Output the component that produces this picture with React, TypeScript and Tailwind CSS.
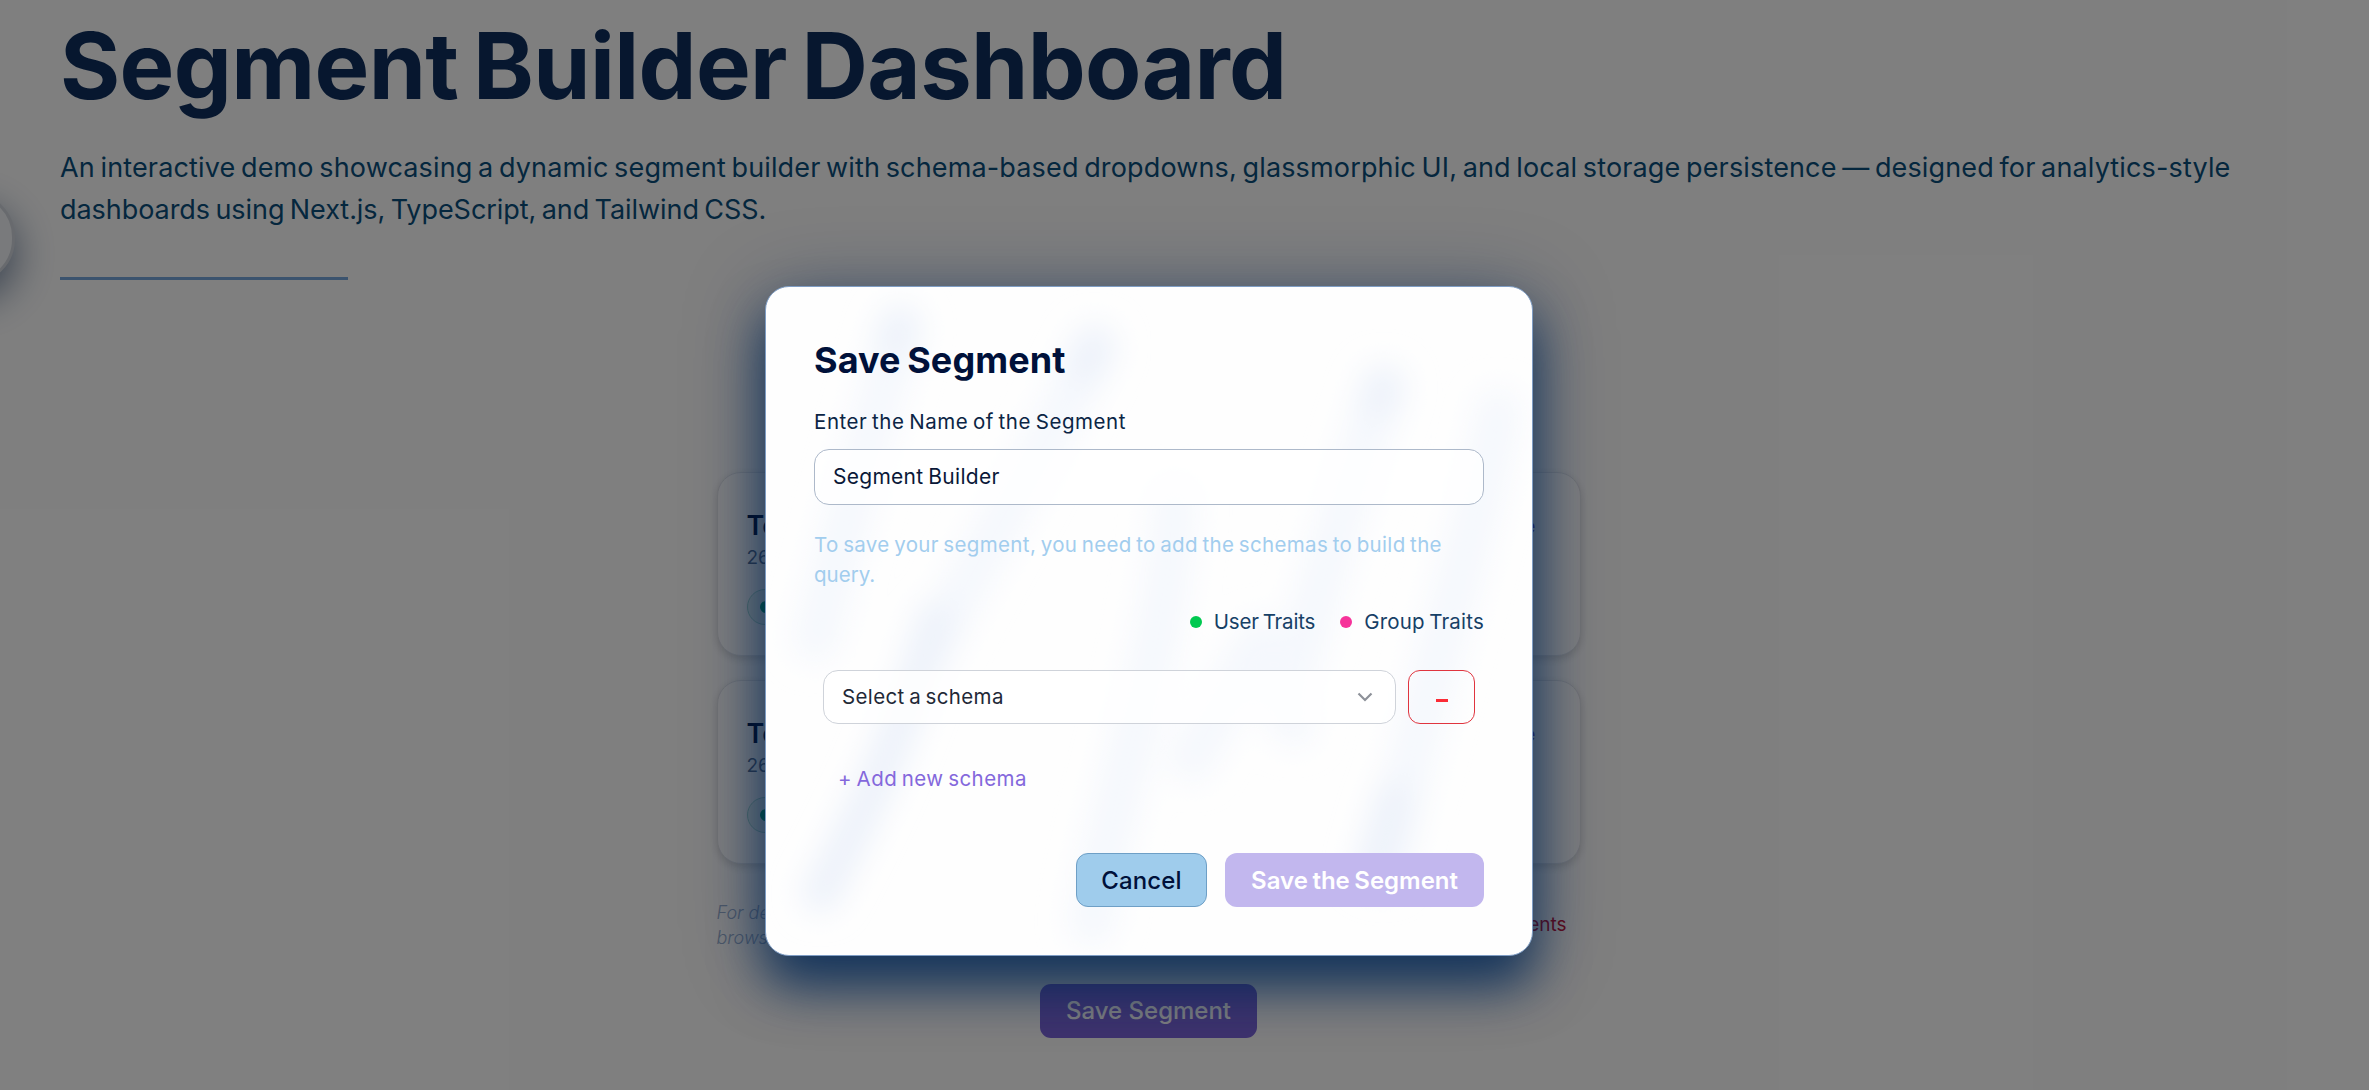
import React from 'react';

function SegmentCard() {
  return (
    <article className="h-[184px] rounded-[24px] border border-gray-200 bg-white px-[29px] pt-[35px] shadow-[0_3px_8px_rgba(0,0,0,0.16)]">
      <div className="flex items-center justify-between pr-[15px]">
        <h3 className="text-[27px] font-semibold leading-9 text-[#00113a]">Test</h3>
        <button className="text-[20px] leading-9 text-[#6941c6]">View more</button>
      </div>
      <p className="text-[19px] leading-7 text-[#5b6f8e]">26/10/2025</p>
      <span className="mt-[17px] inline-flex h-9 items-center gap-2 rounded-full border border-[#a9dccf] bg-[#e8f6f5] px-3 text-base text-[#0f6a5c]">
        <i className="size-3 rounded-full bg-[#00a87a]" />
        Age
      </span>
    </article>
  );
}

function Dashboard() {
  return (
    <main className="h-[1090px] w-[2237px] bg-white pl-[60px] pt-4">
      <h1 className="whitespace-nowrap text-[92px] font-bold leading-[100px] tracking-[-0.007em] text-[#0f2f5e] [word-spacing:-0.07em]">
        Segment Builder Dashboard
      </h1>
      <p className="mt-[31px] whitespace-nowrap text-[27px] leading-[42px] text-[#0b4f7d] [word-spacing:-0.08em]">
        <span className="tracking-[0.0055em]">
          An interactive demo showcasing a dynamic segment builder with schema-based dropdowns, glassmorphic UI, and local
          storage persistence — designed for analytics-style
        </span>
        <br />
        <span className="tracking-[-0.002em]">dashboards using Next.js, TypeScript, and Tailwind CSS.</span>
      </p>
      <div className="mt-[46px] h-[3px] w-[288px] bg-[#76a6dc]" />
      <section className="mx-auto mt-[192px] w-[864px]">
        <div className="flex flex-col gap-6">
          <SegmentCard />
          <SegmentCard />
        </div>
        <div className="mt-[36px] flex h-[50px] items-center justify-between pr-[14px]">
          <p className="text-[18px] font-light italic leading-[25px] text-[#9ab0d0]">
            For demo purposes, segments are saved in your
            <br />
            browser storage
          </p>
          <button className="text-[19px] text-[#c8102e]">Clear all segments</button>
        </div>
        <div className="mt-[34px] flex justify-center">
          <button className="h-[54px] w-[217px] rounded-[11px] bg-[#7d66dd] text-[24px] font-medium text-white">
            Save Segment
          </button>
        </div>
      </section>
    </main>
  );
}

function Streaks() {
  return (
    <svg className="absolute inset-0 size-full rounded-[23px]" viewBox="766 286 767 670" fill="none">
      <defs>
        <filter id="soft" x="-30%" y="-30%" width="160%" height="160%">
          <feGaussianBlur stdDeviation="15" />
        </filter>
      </defs>
      <g filter="url(#soft)" strokeLinecap="round" strokeLinejoin="round">
        <g stroke="#f5f8fd" strokeWidth="46">
          <path d="M900 325 C880 400 850 500 815 640" />
          <path d="M1095 345 C1060 420 1000 520 930 650" />
          <path d="M1385 385 C1350 480 1320 600 1285 700" />
          <path d="M1500 410 C1480 520 1430 680 1385 870" />
          <path d="M1175 500 C1170 640 1110 800 1092 925" />
          <path d="M1260 640 L1192 760 M1260 640 L1294 725" />
        </g>
        <g stroke="#edf2fa" strokeWidth="38">
          <path d="M935 620 C900 740 860 820 820 895" />
          <path d="M900 325 L895 340 M1096 345 L1086 365 M1385 385 L1381 400" />
          <path d="M1395 800 L1375 870" />
        </g>
      </g>
    </svg>
  );
}

function Trait({ dot, className, label }: { dot: string; className: string; label: string }) {
  return (
    <span className="flex items-center gap-[12px]">
      <i className={`size-3 rounded-full ${dot}`} />
      <span className={className}>{label}</span>
    </span>
  );
}

function SaveDialog() {
  return (
    <div
      role="dialog"
      className="relative ml-[765px] mt-[286px] h-[670px] w-[768px] rounded-[24px] border border-[#7f9dc4] bg-[#fefefe] shadow-[0_30px_50px_0_rgba(0,38,85,0.78),0_8px_80px_rgba(0,38,85,0.4)]"
    >
      <Streaks />
      <div className="relative px-[48px] pt-[49px] text-[20.5px] leading-[30px]">
        <h2 className="text-[36px] font-bold leading-[48px] tracking-[0.003em] text-[#00113a] [word-spacing:-0.06em]">
          Save Segment
        </h2>
        <label className="mt-[23px] block tracking-[0.027em] text-[#0b2545] [word-spacing:-0.08em]">
          Enter the Name of the Segment
        </label>
        <div className="mt-[12px] flex h-[56px] items-center rounded-[15px] border border-[#adb9ca] bg-white/80 px-[18px] text-[21px] tracking-[0.013em] text-[#0a1838] [word-spacing:-0.06em]">
          Segment Builder
        </div>
        <p className="mt-[25px] whitespace-nowrap text-[#a2cdee] [word-spacing:-0.08em]">
          <span className="tracking-[0.0175em]">To save your segment, you need to add the schemas to build the</span>
          <br />
          query.
        </p>
        <div className="mt-[17px] flex justify-end gap-[25px] text-[#164066] [word-spacing:-0.08em]">
          <Trait dot="bg-[#00c950]" className="tracking-[-0.009em]" label="User Traits" />
          <Trait dot="bg-[#f6339a]" className="tracking-[0.01em]" label="Group Traits" />
        </div>
        <div className="mt-[33px] flex gap-[12px] pl-[9px]">
          <div className="flex h-[54px] w-[573px] items-center justify-between rounded-[15px] border border-[#cfd3da] bg-white/80 pl-[18px] pr-[22px] text-[#1f2937]">
            <span className="tracking-[0.018em] [word-spacing:-0.08em]">Select a schema</span>
            <svg className="size-[16px]" viewBox="0 0 16 16" fill="none" stroke="#8d9199" strokeWidth="2.2">
              <path d="M1.5 4.5 L8 11 L14.5 4.5" />
            </svg>
          </div>
          <button className="flex h-[54px] w-[67px] items-center justify-center rounded-[12px] border border-[#e0353f]">
            <svg className="mt-[7px] h-[3px] w-[12px]" viewBox="0 0 12 3">
              <rect width="12" height="3" fill="#fb2c36" />
            </svg>
          </button>
        </div>
        <button className="ml-[24px] mt-[40px] block tracking-[0.022em] text-[#8468dc] [word-spacing:-0.08em]">
          + Add new schema
        </button>
        <div className="mt-[59px] flex justify-end gap-[18px] text-[24px]">
          <button className="h-[54px] w-[131px] rounded-[12px] border border-[#6e9fc6] bg-[#9fccec] pt-px font-medium tracking-[0.005em] text-[#00113a]">
            Cancel
          </button>
          <button className="h-[54px] w-[259px] rounded-[12px] bg-[#c2b7ee] pt-px font-semibold tracking-[-0.001em] text-white [word-spacing:-0.06em]">
            Save the Segment
          </button>
        </div>
      </div>
    </div>
  );
}

export default function App() {
  return (
    <div className="relative h-[1090px] w-full overflow-hidden bg-white font-['Inter',sans-serif]">
      <Dashboard />
      <button className="absolute left-[-75px] top-[192px] h-[92px] w-[90px] rounded-full border-[3px] border-[#d0d5dc] bg-[#f2f5f8] shadow-[0_16px_40px_rgba(15,47,94,0.6)]" />
      <div className="absolute inset-0 flex items-start bg-black/50">
        <SaveDialog />
      </div>
    </div>
  );
}
